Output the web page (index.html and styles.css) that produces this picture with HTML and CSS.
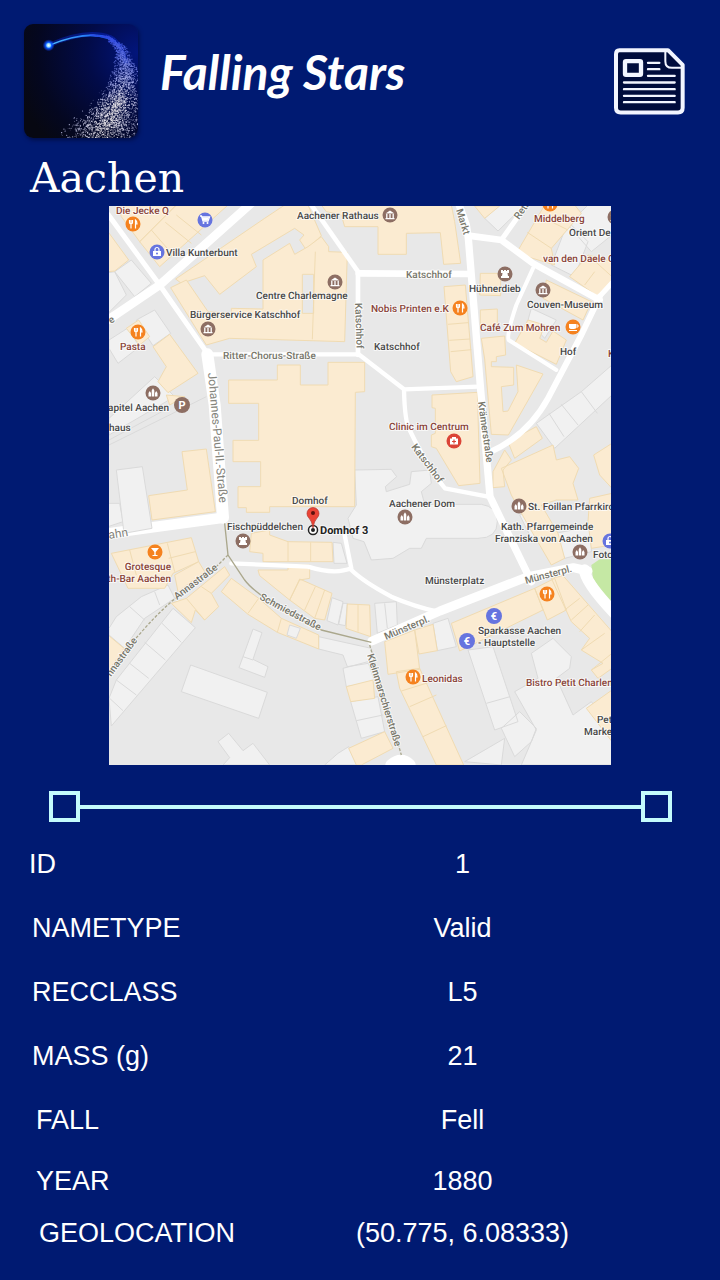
FILE: index.html
```html
<!DOCTYPE html>
<html lang="en">
<head>
<meta charset="utf-8">
<meta name="viewport" content="width=device-width, initial-scale=1">
<title>Falling Stars</title>
<link rel="stylesheet" href="styles.css">
</head>
<body>
<header class="topbar">
  <svg class="logo" viewBox="72 72 342 342" aria-hidden="true">
    <defs>
      <radialGradient id="night" cx="100%" cy="25%" r="110%">
        <stop offset="0" stop-color="#02157c"/><stop offset=".4" stop-color="#020b48"/><stop offset=".8" stop-color="#040720"/><stop offset="1" stop-color="#070812"/>
      </radialGradient>
      <linearGradient id="trail"><stop offset="0" stop-color="#4fc0ff"/><stop offset=".65" stop-color="#1b6df5"/><stop offset="1" stop-color="#2233cf"/></linearGradient>
      <radialGradient id="glow"><stop offset="0" stop-color="#fff"/><stop offset=".3" stop-color="#8fdcff"/><stop offset=".5" stop-color="#0b5cff"/><stop offset="1" stop-color="#0b3cff" stop-opacity="0"/></radialGradient>
    </defs>
    <rect x="72" y="72" width="342" height="342" fill="url(#night)"/>
    <path d="M146 136Q260 85 330 112Q365 130 378 190" fill="none" stroke="#0a2ee0" stroke-opacity=".4" stroke-width="14"/>
    <path d="M146 134Q260 86 330 111Q352 121 366 150Q345 124 322 117Q255 93 146 139Z" fill="url(#trail)"/>
    <g id="dust"></g>
    <circle cx="146" cy="136" r="18" fill="url(#glow)"/>
  </svg>
  <h1 class="brand">Falling Stars</h1>
  <button class="news" type="button" aria-label="News">
    <svg viewBox="42 39 213 200" aria-hidden="true">
      <path d="M58 45H204L248 89V218Q248 232 234 232H62Q48 232 48 218V57Q48 45 58 45Z" fill="#000c3c" stroke="#f2f5ff" stroke-width="12" stroke-linejoin="round"/>
      <path d="M196 48V78Q196 98 216 98H248" fill="none" stroke="#f2f5ff" stroke-width="6"/>
      <rect x="75" y="78" width="48" height="41" rx="3" fill="#000c3c" stroke="#f2f5ff" stroke-width="13"/>
      <path d="M144 83H178M144 102H178M144 122H224M72 142H224M72 162H224M72 182H224M72 201H224" stroke="#f2f5ff" stroke-width="7" stroke-linecap="round"/>
    </svg>
  </button>
</header>
<main>
  <h2 class="place">Aachen</h2>
  <svg class="map" viewBox="1 1 502 559" role="img" aria-label="Map of Domhof 3, Aachen">
    <defs>
      <g id="food"><circle r="7.5" fill="#f5821f"/><path d="M-3.5-4V-1.5Q-3.5 0-2 0V4.5M-2-4V0M-.5-4V-1.5Q-.5 0-2 0M2.5 4.5V-4Q4-3 4 0H2.5" fill="none" stroke="#fff" stroke-width="1.2"/></g>
      <g id="museum"><circle r="7.5" fill="#8d6e63"/><path d="M-4.5-1.5L0-4.5L4.5-1.5ZM-4.5 3H4.5V4.2H-4.5Z" fill="#fff"/><path d="M-3.2-1V3M0-1V3M3.2-1V3" stroke="#fff" stroke-width="1.3"/></g>
      <g id="church"><circle r="7.5" fill="#8d6e63"/><path d="M-4.5 3.5V0L-3.2-2L-2 0V3.5ZM-1.3 3.5V-2.5L0-4.8L1.3-2.5V3.5ZM2 3.5V0L3.2-2L4.5 0V3.5Z" fill="#fff"/></g>
      <g id="tower"><circle r="7.5" fill="#8d6e63"/><path d="M-4-4H-2V-3H-1V-4H1V-3H2V-4H4V-1H2.5L3 2H4V4H-4V2H-3L-2.5-1H-4Z" fill="#fff"/></g>
      <g id="cart"><circle r="7.5" fill="#6674df"/><path d="M-5-4H-3.5L-2 1H3L4.5-3H-3" fill="none" stroke="#fff" stroke-width="1.3"/><path d="M-3-2.5H4L2.5 .5H-2Z" fill="#fff"/><circle cx="-1.5" cy="3" r="1" fill="#fff"/><circle cx="2.5" cy="3" r="1" fill="#fff"/></g>
      <g id="bag"><circle r="7.5" fill="#6674df"/><path d="M-4-1H4V4H-4Z" fill="#fff"/><path d="M-2-1V-2.5A2 2 0 0 1 2-2.5V-1" fill="none" stroke="#fff" stroke-width="1.2"/><circle cy="1.5" r="1" fill="#6674df"/></g>
      <g id="cup"><circle r="7.5" fill="#f5821f"/><path d="M-4-3H3V1Q3 2-1 2Q-4 2-4 0ZM-4 3H4V4H-4Z" fill="#fff"/><path d="M3-2H5V0H3" fill="none" stroke="#fff"/></g>
      <g id="bar"><circle r="7.5" fill="#f5821f"/><path d="M-4-4H4L.7 0V3H2.5V4H-2.5V3H-.7V0Z" fill="#fff"/></g>
      <g id="clinic"><circle r="7.5" fill="#db4437"/><path d="M-4-2.5H-2V-4H2V-2.5H4V3.5H-4Z" fill="#fff"/><path d="M0-1.5V2.5M-2 .5H2" stroke="#db4437" stroke-width="1.2"/></g>
    </defs>
    <rect width="504" height="561" fill="#e8e8e8"/>
    <svg width="504" height="560" viewBox="0 0 1512 1680">
      <g class="plain">
        <path d="M70 165L130 235L80 275L20 200ZM0 203L20 200L55 270L0 325ZM85 345L140 315L188 385L135 422ZM3 405L58 370L95 425L30 475L3 430ZM3 640L140 515L200 575L3 690ZM3 720L295 575M3 705L180 610"/>
        <path d="M1130 40L1175 0L1250 0L1170 78ZM1380 50L1440 110L1400 215L1330 180ZM1440 0L1512 0V90L1450 140L1380 60ZM1270 310L1345 345L1310 400L1260 345ZM1285 655L1420 560L1512 480V570L1340 730ZM1323 625L1368 695M1360 598L1410 660M1420 560L1468 625"/>
        <path d="M740 795L850 793L866 815L832 845L835 860L905 838L910 800L965 795L970 835L940 860L950 898H1120Q1168 905 1168 950Q1168 1000 1110 1000H955L940 1030H905L855 1060L790 1065L768 1010L735 1000L720 940L745 900Z"/>
        <path d="M0 895L35 895L45 950L0 965ZM675 1012L700 1015L717 1075H678ZM672 1178L705 1190L690 1260L657 1247ZM705 1195H718L712 1262L692 1258ZM800 1195L865 1190L868 1260L808 1285ZM830 1195L838 1270M632 1295L790 1330L800 1372L718 1385L705 1350L632 1332ZM705 1390L780 1370L800 1430L715 1445ZM728 1490L810 1475L830 1580L760 1600ZM745 1547L825 1530"/>
        <path d="M195 1210L262 1268L10 1563L3 1480L25 1425ZM162 1255L220 1312M110 1312L172 1365M65 1375L122 1420M25 1425L85 1470M5 1480L45 1517M3 1270L25 1235L100 1175L180 1140L200 1180L110 1240L50 1330L3 1290ZM65 1205L110 1245M140 1160L155 1200"/>
        <path d="M435 1272L462 1283L435 1363L480 1385L470 1417L393 1388L405 1355ZM405 1355L435 1365M248 1380L478 1462L452 1540L220 1460ZM330 1610L362 1585L405 1637L435 1615L485 1680H345L365 1658ZM650 1680L690 1645L722 1625L755 1680Z"/>
        <path d="M975 1255L1020 1240L1045 1325L988 1337ZM1080 1335L1155 1325L1230 1550L1160 1575ZM1135 1495L1206 1475M1180 1570L1235 1520L1285 1570L1270 1610L1220 1655ZM1220 1460L1290 1420L1270 1345L1335 1300L1390 1355L1385 1390L1345 1420L1395 1530L1450 1490L1512 1580V1680H1240L1270 1610L1285 1575ZM1070 1670L1190 1600L1180 1680Z"/>
        <path d="M1340 985L1450 965V1040L1370 1060ZM1235 930L1290 910L1320 1010L1270 1000Z"/>
      </g>
      <g class="built">
        <path d="M30 0H205L95 110L40 35ZM95 110L205 0H360L155 185ZM130 75L195 150M172 52L250 115M205 30L280 90M0 80L62 165L20 198L0 200ZM203 222L470 40L530 0H600L640 92L595 135L575 105L588 90L560 70L430 148L445 185L335 268L290 212L220 235Z"/>
        <path fill-rule="evenodd" d="M465 165L545 115L560 148L600 125L640 95L662 125V140L718 142L710 410L365 400L295 420L188 248L235 225L300 320L370 325V310L465 312ZM583 208H617V325H583ZM622 140L613 403"/>
        <path d="M135 425L185 388L270 505L180 563L150 530L175 485ZM55 370L92 345L125 395L95 420ZM175 570L185 600L230 575Z"/>
        <path d="M362 525H508V480H577V540H660V472H770V560L742 562L740 905H485V922H415V908H390V845H458V770H375V706H452V595H362Z"/>
        <path d="M640 0L655 20L700 30L710 65L810 65V148H895V85L997 83L1007 178L1058 175L1040 50L1030 0ZM1100 3H1175L1130 40ZM1225 145L1310 0H1400L1420 25L1330 130L1340 180ZM1258 82L1330 130M1290 30L1380 75M1385 215L1440 150L1512 170V230L1470 275ZM1440 150L1512 215M1430 240L1460 200"/>
        <path d="M1008 245L1072 240L1095 515L1045 530L1028 500ZM1020 358L1080 353M1024 406L1086 402M1028 440L1090 434M1117 205H1178V272L1115 270ZM1117 315L1168 312V360L1117 365ZM1120 400L1190 393L1193 450L1165 455V470H1150V485L1217 487V540L1180 545L1185 620L1200 618L1230 560L1225 480L1305 507L1275 560L1201 690L1150 688L1130 462ZM1315 225L1450 290L1425 345L1305 280ZM1220 415L1260 345L1310 360L1295 400L1315 412L1335 378L1375 405L1345 478Z"/>
        <path d="M972 570L1108 562L1116 835L1052 842L985 730L970 725V690L982 685V610L972 608ZM1200 710L1285 665L1303 700L1220 760ZM1155 800L1190 735L1210 765L1185 795L1190 845L1155 848ZM1180 790L1335 720L1345 765L1385 755L1412 790L1395 835L1410 885L1345 885L1300 900L1350 985L1370 1060L1330 1080L1260 960L1210 870ZM1457 750L1512 715V850L1475 810ZM1445 880L1512 865V1020L1450 1030L1440 950Z"/>
        <path d="M222 740L295 732L322 920L132 945L122 872L238 855ZM10 1045L250 998L272 1070L195 1105L170 1150H60ZM65 1035L85 1110M178 1015L200 1100M182 1060L262 1040M430 985L485 975V990L540 1010L672 1012L675 1070H465V1045L425 1040ZM540 1010V1070M608 1012V1070M450 1095H540V1080H605V1120L575 1125L545 1185L455 1112ZM575 1122L672 1165L650 1245L620 1240L545 1185ZM622 1145L590 1215M650 1155L620 1240M718 1197L785 1200L788 1295L714 1270ZM750 1200V1280"/>
        <path d="M370 1120L452 1180L520 1240L632 1290V1332L508 1282L420 1228L340 1160ZM452 1180L420 1225M520 1240L508 1282M190 1195L235 1180L350 1085L365 1110L310 1165L332 1205L290 1245L262 1215L250 1253ZM235 1180L290 1245M280 1145L310 1165M200 1110L272 1070L290 1100L210 1160ZM0 1290L48 1330L0 1400ZM715 1445L795 1425L800 1480L728 1490ZM722 1630L830 1580L855 1630L760 1680H745Z"/>
        <path d="M830 1310L920 1275L935 1393L840 1408ZM920 1275L975 1258L988 1337L933 1347ZM1030 1255L1280 1150L1305 1215L1055 1338ZM1280 1150L1340 1120L1375 1215L1318 1245ZM1330 1120L1365 1112L1512 1280V1390L1470 1420L1450 1395L1485 1375L1420 1335L1445 1300L1390 1250ZM1370 1215L1415 1180M1390 1245L1440 1200M1415 1280L1460 1230M1420 1335L1490 1285M1450 1395L1512 1345M865 1400L935 1390L1067 1680H985L875 1450ZM880 1458L970 1430M905 1505L985 1470M945 1595L1015 1562M1435 1510L1512 1455V1610Z"/>
      </g>
      <path class="plain" d="M545 1260L577 1270L565 1300L537 1290Z"/>
      <path d="M1450 1080L1475 1063H1512V1210L1455 1120Z" fill="#c5e8a4"/>
      <g class="roads">
        <path d="M435 -10L155 240L0 345" stroke-width="26"/>
        <path d="M0 28L155 240L298 445" stroke-width="15"/>
        <path d="M298 448L320 600L345 938" stroke-width="36"/>
        <path d="M345 938L135 967L-10 987" stroke-width="32"/>
        <path d="M310 448H752L888 553L1110 545M888 553Q890 650 905 675Q960 790 1011 850L1140 875" stroke-width="13"/>
        <path d="M610 0L750 200V450" stroke-width="14"/>
        <path d="M752 205L1085 207" stroke-width="20"/>
        <path d="M1050 -10L1075 60L1081 100L1118 555L1146 875L1270 1130" stroke-width="22"/>
        <path d="M1081 92L1180 105L1275 175L1475 285" stroke-width="20"/>
        <path d="M1180 105L1262 -10M1465 285L1520 225" stroke-width="15"/>
        <path d="M1475 275L1420 390L1320 580Q1260 690 1145 742" stroke-width="18"/>
        <path d="M1275 190L1225 300Q1195 390 1202 405L1345 495" stroke-width="12"/>
        <path d="M792 1308L996 1218L1260 1115L1396 1088L1440 1098" stroke-width="27"/>
        <path d="M1430 1095Q1430 1130 1520 1225" stroke-width="34"/>
        <path d="M370 1075L600 1085Q680 1110 730 1090L710 990M728 1093Q765 1130 850 1175Q920 1205 990 1220" stroke-width="13"/>
        <path d="M850 1680Q880 1655 905 1680" stroke-width="36"/>
      </g>
      <path class="plain" d="M25 795L103 785L132 970L48 985Z"/>
      <g class="lanes">
        <path d="M350 955L360 1050L410 1125Q450 1180 640 1275L790 1312"/>
        <path d="M360 1050L320 1090L190 1190Q90 1280 0 1410M785 1320L880 1650" stroke-dasharray="9 5"/>
      </g>
    </svg>
    <g class="street">
      <text x="298" y="73">Katschhof</text>
      <text x="115" y="154">Ritter-Chorus-Straße</text>
      <text transform="translate(348 5) rotate(73)">Markt</text>
      <text transform="translate(411 15) rotate(-55)">Reth</text>
      <text transform="translate(247 98) rotate(88)">Katschhof</text>
      <text transform="translate(100 168) rotate(85)" class="major">Johannes-Paul-II.-Straße</text>
      <text transform="translate(370 197) rotate(82)">Krämerstraße</text>
      <text transform="translate(303 242) rotate(53)">Katschhof</text>
      <text transform="translate(1 334) rotate(-9)" class="major">ahn</text>
      <text transform="translate(3 119) rotate(-35)">e</text>
      <text transform="translate(69 395) rotate(-37)">Annastraße</text>
      <text transform="translate(3 472) rotate(-54)">nnastraße</text>
      <text transform="translate(151 394) rotate(28)">Schmiedstraße</text>
      <text transform="translate(278 435) rotate(-23)">Münsterpl.</text>
      <text transform="translate(418 379) rotate(-15)">Münsterpl.</text>
      <text transform="translate(259 450) rotate(73)">Kleinmarschierstraße</text>
    </g>
    <g class="label">
      <text x="189" y="14">Aachener Rathaus</text>
      <text x="58" y="51">Villa Kunterbunt</text>
      <text x="148" y="94">Centre Charlemagne</text>
      <text x="82" y="113">Bürgerservice Katschhof</text>
      <text x="266" y="145">Katschhof</text>
      <text x="461" y="31">Orient De</text>
      <text x="361" y="87">Hühnerdieb</text>
      <text x="419" y="103">Couven-Museum</text>
      <text x="452" y="150">Hof</text>
      <text x="61" y="206" class="to-end">apitel Aachen</text>
      <text x="1" y="226">haus</text>
      <text x="184" y="299">Domhof</text>
      <text x="119" y="325">Fischpüddelchen</text>
      <text x="281" y="302">Aachener Dom</text>
      <text x="420" y="305">St. Foillan Pfarrkirche</text>
      <text x="393" y="325">Kath. Pfarrgemeinde</text>
      <text x="387" y="337">Franziska von Aachen</text>
      <text x="485" y="353">Foto</text>
      <text x="317" y="379">Münsterplatz</text>
      <text x="370" y="429">Sparkasse Aachen</text>
      <text x="370" y="441">- Hauptstelle</text>
      <text x="489" y="518">Pet</text>
      <text x="476" y="530">Marke</text>
      <text x="212" y="329" class="target">Domhof 3</text>
    </g>
    <g class="label venue">
      <text x="8" y="9">Die Jecke Q</text>
      <text x="12" y="145">Pasta</text>
      <text x="426" y="17">Middelberg</text>
      <text x="435" y="57">van den Daele C</text>
      <text x="263" y="107">Nobis Printen e.K</text>
      <text x="372" y="126">Café Zum Mohren</text>
      <text x="281" y="225">Clinic im Centrum</text>
      <text x="500" y="152">K</text>
      <text x="63" y="365" class="to-end">Grotesque</text>
      <text x="63" y="377" class="to-end">th-Bar Aachen</text>
      <text x="314" y="477">Leonidas</text>
      <text x="418" y="481">Bistro Petit Charlemagne</text>
    </g>
    <use href="#food" x="25" y="19"/><use href="#cart" x="97" y="15"/><use href="#bag" x="49" y="47"/>
    <use href="#museum" x="227" y="77"/><use href="#museum" x="100" y="124"/><use href="#food" x="30" y="127"/>
    <use href="#museum" x="282" y="10"/><use href="#food" x="442" y="-1"/><use href="#tower" x="397" y="69"/>
    <use href="#museum" x="435" y="85"/><use href="#food" x="352" y="103"/><use href="#cup" x="465" y="122"/>
    <use href="#church" x="45" y="188"/><use href="#museum" x="507" y="12"/><use href="#clinic" x="346" y="236"/>
    <use href="#tower" x="135" y="336"/><use href="#bar" x="47" y="347"/><use href="#church" x="297" y="312"/>
    <use href="#church" x="411" y="301"/><use href="#church" x="472" y="347"/><use href="#bag" x="502" y="336"/>
    <use href="#food" x="439" y="389"/><use href="#food" x="305" y="472"/>
    <circle cx="74" cy="200" r="8" fill="#8d6e63"/><circle cx="386" cy="411" r="8" fill="#6674df"/><circle cx="359" cy="436" r="8" fill="#6674df"/>
    <g class="sign"><text x="74" y="204">P</text><text x="386" y="415">€</text><text x="359" y="440">€</text></g>
    <circle cx="205" cy="325" r="4.5" fill="#fff" stroke="#222" stroke-width="1.5"/><circle cx="205" cy="325" r="2" fill="#222"/>
    <path d="M205 323Q204 316 201 313A6 6 0 1 1 209 313Q206 316 205 323Z" fill="#ea4335" stroke="#b6342a" stroke-width=".7"/><circle cx="205" cy="308" r="2" fill="#5c110c"/>
  </svg>
  <div class="divider" aria-hidden="true"><span class="knob"></span><span class="bar"></span><span class="knob"></span></div>
  <table class="facts">
    <tbody>
      <tr><th scope="row">ID</th><td>1</td></tr>
      <tr class="step-1"><th scope="row">NAMETYPE</th><td>Valid</td></tr>
      <tr class="step-1"><th scope="row">RECCLASS</th><td>L5</td></tr>
      <tr class="step-1"><th scope="row">MASS (g)</th><td>21</td></tr>
      <tr class="step-2"><th scope="row">FALL</th><td>Fell</td></tr>
      <tr class="step-2 snug"><th scope="row">YEAR</th><td>1880</td></tr>
      <tr class="step-3 tight"><th scope="row">GEOLOCATION</th><td>(50.775, 6.08333)</td></tr>
    </tbody>
  </table>
</main>
<script src="dust.js"></script>
</body>
</html>
```

FILE: styles.css
```css
* { box-sizing: border-box; }

body {
  margin: 0;
  background: #001a72;
  color: #fff;
  font-family: "Liberation Sans", Arial, sans-serif;
}

.topbar {
  display: flex;
  align-items: flex-start;
  gap: 22px;
  padding: 24px 35px 0 24px;
}

.logo {
  width: 114px;
  height: 114px;
  border-radius: 9px;
  box-shadow: 1px 2px 4px rgba(0, 5, 40, 0.6);
}

.brand {
  flex: 1;
  margin: 0;
  padding-top: 18px;
  font: italic 700 48px/60px Lato, "Liberation Sans", sans-serif;
  white-space: nowrap;
}

.news {
  margin: 24px 0 0;
  padding: 0;
  border: 0;
  background: none;
  cursor: pointer;
}

.news svg {
  display: block;
  width: 71px;
  height: 67px;
}

.place {
  margin: 16px 0 0;
  padding-left: 30px;
  font: 400 41px/48px "DejaVu Serif", serif;
}

.map {
  display: block;
  width: 502px;
  max-width: 100%;
  height: auto;
  margin: 4px auto 0;
}

.plain { fill: #f1f1f1; stroke: #dadada; stroke-width: 3; }
.built { fill: #fbebd1; stroke: #f0dbb2; stroke-width: 3; }
.roads { fill: none; stroke: #fff; stroke-linejoin: round; stroke-linecap: round; }
.lanes { fill: none; stroke: #aaa78c; stroke-width: 4; }

.street,
.label {
  font: 500 10px Roboto, sans-serif;
  text-rendering: geometricPrecision;
  paint-order: stroke;
  stroke: rgba(255, 255, 255, 0.7);
  stroke-width: 2px;
  stroke-linejoin: round;
}

.street { fill: #77766a; }
.major { font-size: 12px; font-weight: 400; fill: #85857d; }
.label { fill: #484848; }
.venue { fill: #8a4439; }
.to-end { text-anchor: end; }
.target { font-size: 11px; font-weight: 700; fill: #222; }
.sign { font: 700 11px Roboto, sans-serif; fill: #fff; text-anchor: middle; }

.divider {
  display: flex;
  align-items: center;
  padding: 26px 48px 0 49px;
}

.knob {
  width: 31px;
  height: 31px;
  border: 4px solid #c4fbfc;
}

.bar {
  flex: 1;
  height: 4px;
  background: #c4fbfc;
}

.facts {
  width: 100%;
  margin-top: 10px;
  border-collapse: collapse;
  table-layout: fixed;
  font-size: 27px;
  line-height: 32px;
}

.facts tr { height: 64px; }
.facts .snug { height: 58px; }
.facts .tight { height: 46px; }

.facts th {
  width: 40%;
  padding: 0 0 0 29px;
  font-weight: 400;
  text-align: left;
}

.facts .step-1 th { padding-left: 32px; }
.facts .step-2 th { padding-left: 36px; }
.facts .step-3 th { padding-left: 39px; }

.facts td {
  padding: 0 83px 0 0;
  text-align: center;
}
```

FILE: dust.js
```javascript
// Star dust along the comet's tail: [x, y, spread] stops, widening as it falls.
var stops = [[270, 104, 3], [325, 111, 9], [362, 145, 22], [378, 200, 36], [368, 260, 54], [348, 320, 76], [322, 370, 105], [300, 412, 135]];
var seed = 7;
function rand() {
  seed = (seed * 16807) % 2147483647;
  return seed / 2147483647;
}
var dots = "";
for (var i = 0; i < 3600; i++) {
  var t = Math.pow(rand(), 0.6) * (stops.length - 1);
  var k = Math.min(Math.floor(t), stops.length - 2);
  var f = t - k, a = stops[k], b = stops[k + 1];
  var off = rand() + rand() - 1;
  var spread = a[2] + (b[2] - a[2]) * f;
  var x = a[0] + (b[0] - a[0]) * f + off * spread;
  var y = a[1] + (b[1] - a[1]) * f + (rand() - 0.5) * spread * 0.5;
  var w = Math.min(1, Math.max(0, (y - 110) / 200)) * (1 - 0.3 * Math.abs(off));
  var color = "rgb(" + Math.round(50 + 195 * w) + "," + Math.round(75 + 165 * w) + "," + Math.round(225 + 15 * w) + ")";
  dots += '<circle cx="' + x.toFixed(1) + '" cy="' + y.toFixed(1) + '" r="' + (1 + rand()).toFixed(1) + '" fill="' + color + '" opacity="' + (0.5 + 0.5 * rand()).toFixed(2) + '"/>';
}
document.getElementById("dust").innerHTML = dots;
```
